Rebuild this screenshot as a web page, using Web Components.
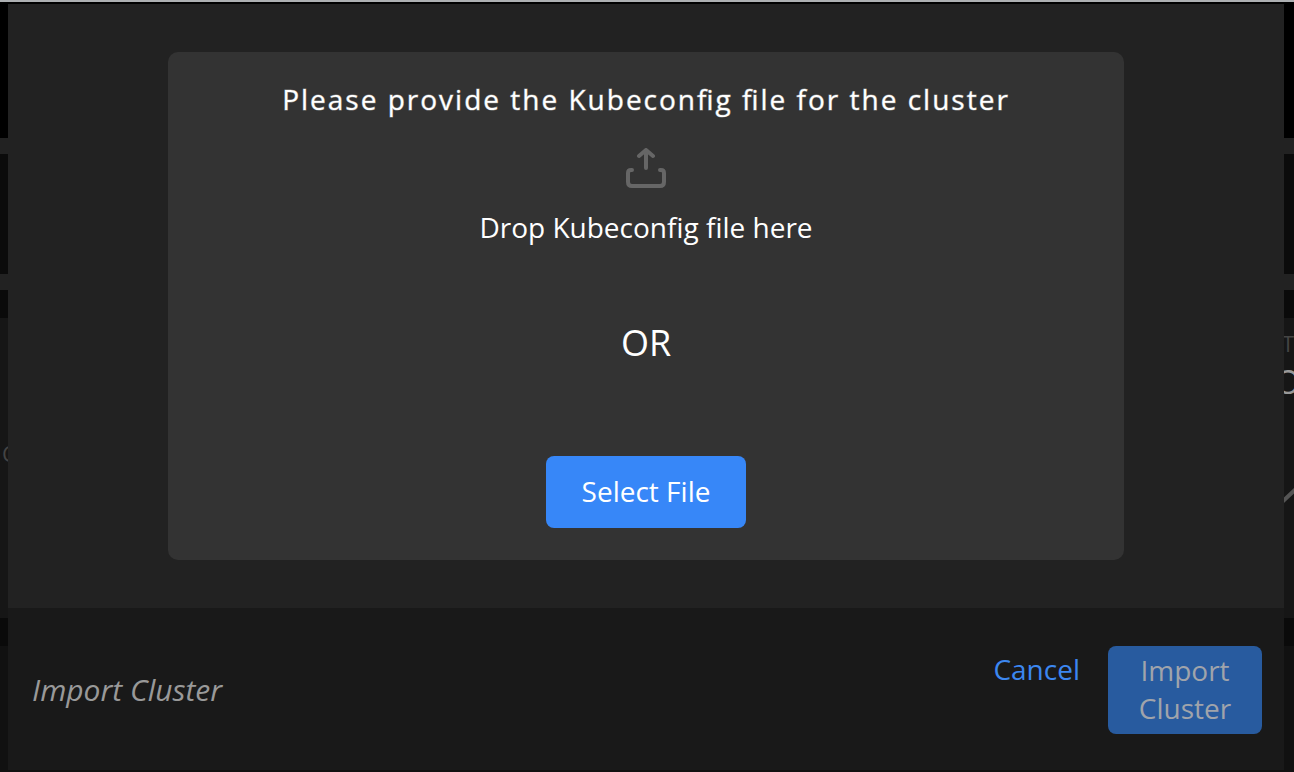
<!DOCTYPE html>
<html lang="en">
<head>
<meta charset="utf-8">
<title>Import Cluster</title>
<style>
html, body { height: 100%; }
body { margin: 0; background: #111; color: #fff; font-family: "Open Sans", sans-serif; font-size: 28px; line-height: 38px; overflow: hidden; }
</style>
</head>
<body>
<import-page></import-page>
<script>
const define = (name, html, setup) => customElements.define(name, class extends HTMLElement {
  constructor() {
    super();
    const template = document.createElement('template');
    template.innerHTML = html;
    this.attachShadow({ mode: 'open' }).append(template.content.cloneNode(true));
    if (setup) setup(this);
  }
});

define('ui-button', `
<style>
:host { display: block; }
button { display: block; width: 100%; margin: 0; border: 0; border-radius: 8px; padding: var(--pad, 16px 24px 18px); background: var(--bg, #3787f8); color: var(--fg, #fff); font: inherit; letter-spacing: inherit; text-align: center; }
</style>
<button type="button"><slot></slot></button>`, el => {
  el.shadowRoot.querySelector('button').disabled = el.hasAttribute('disabled');
});

define('upload-icon', `
<style>
:host { display: block; width: 40px; height: 40px; }
svg { display: block; }
</style>
<svg width="40" height="40" viewBox="0 0 40 40" fill="none" stroke="#666" stroke-width="4" stroke-linecap="round" stroke-linejoin="round" aria-hidden="true">
<path d="M20 20V3"/><path d="M13 8L20 2L27 8"/><path d="M6 22H5Q2 22 2 25V34Q2 38 6 38H34Q38 38 38 34V25Q38 22 35 22H34"/>
</svg>`);

define('drop-zone', `
<style>
:host { display: flex; flex-direction: column; align-items: center; box-sizing: border-box; padding: 28px 32px 32px; border-radius: 10px; background: #333; text-align: center; }
h1 { margin: 0; font: inherit; letter-spacing: 2px; font-feature-settings: "liga" 1; -webkit-text-stroke: 1px rgba(255, 255, 255, .4); }
upload-icon { margin-top: 30px; }
p { margin: 20px 0 0; }
.or { margin: 73px 0 89px; font-size: 36px; line-height: 48px; }
ui-button { width: 200px; letter-spacing: 0; }
</style>
<h1>Please provide the Kubeconfig file for the cluster</h1>
<upload-icon></upload-icon>
<p>Drop Kubeconfig file here</p>
<p class="or">OR</p>
<ui-button>Select File</ui-button>`);

define('modal-footer', `
<style>
:host { display: flex; align-items: flex-start; justify-content: space-between; padding: 38px 22px 36px 24px; background: #191919; }
.title { align-self: center; color: #999; font-size: 30px; font-style: italic; }
.actions { display: flex; align-items: flex-start; gap: 16px; }
.cancel { --bg: transparent; --fg: #3c87f0; --pad: 4px 12px; }
.import { width: 154px; --bg: #285b9f; --fg: #a0a4ab; --pad: 5px 24px 7px; }
</style>
<span class="title">Import Cluster</span>
<div class="actions"><ui-button class="cancel">Cancel</ui-button><ui-button class="import" disabled>Import Cluster</ui-button></div>`);

define('import-modal', `
<style>
:host { display: flex; flex-direction: column; }
main { flex: 1; padding: 48px 160px; background: #222; }
</style>
<main><drop-zone></drop-zone></main>
<modal-footer></modal-footer>`);

define('dimmed-dashboard', `
<style>
:host { display: flex; flex-direction: column; min-height: 100vh; background: #111; }
.edge { height: 2px; background: #adb0b2; }
.top { height: 136px; background: #000; }
.rule { height: 16px; background: #222; }
.row { height: 120px; background: #0b0b0b; }
.gap { height: 28px; background: #0a0a0a; }
.cards { display: flex; justify-content: space-between; height: 300px; overflow: hidden; background: #161616; font-size: 22px; line-height: 30px; color: #444; }
.left { padding: 120px 0 0 2px; }
.right { display: flex; flex-direction: column; align-items: center; width: 12px; padding-top: 10px; }
.value { font-size: 32px; line-height: 48px; color: #999; }
svg { display: block; margin-top: 78px; }
</style>
<div class="edge"></div><div class="top"></div><div class="rule"></div><div class="row"></div><div class="rule"></div><div class="gap"></div>
<div class="cards"><div class="left">C</div><div class="right"><span>T</span><span class="value">O</span><svg width="14" height="24" viewBox="0 0 14 24" fill="none" stroke="#555" stroke-width="4" aria-hidden="true"><path d="M0 19L16 4"/></svg></div></div>
<div class="gap"></div>`);

define('import-page', `
<style>
:host { display: block; position: relative; min-height: 100vh; overflow: hidden; }
import-modal { position: absolute; inset: 4px 10px 2px 8px; }
</style>
<dimmed-dashboard></dimmed-dashboard>
<import-modal role="dialog" aria-label="Import Cluster"></import-modal>`);
</script>
</body>
</html>
